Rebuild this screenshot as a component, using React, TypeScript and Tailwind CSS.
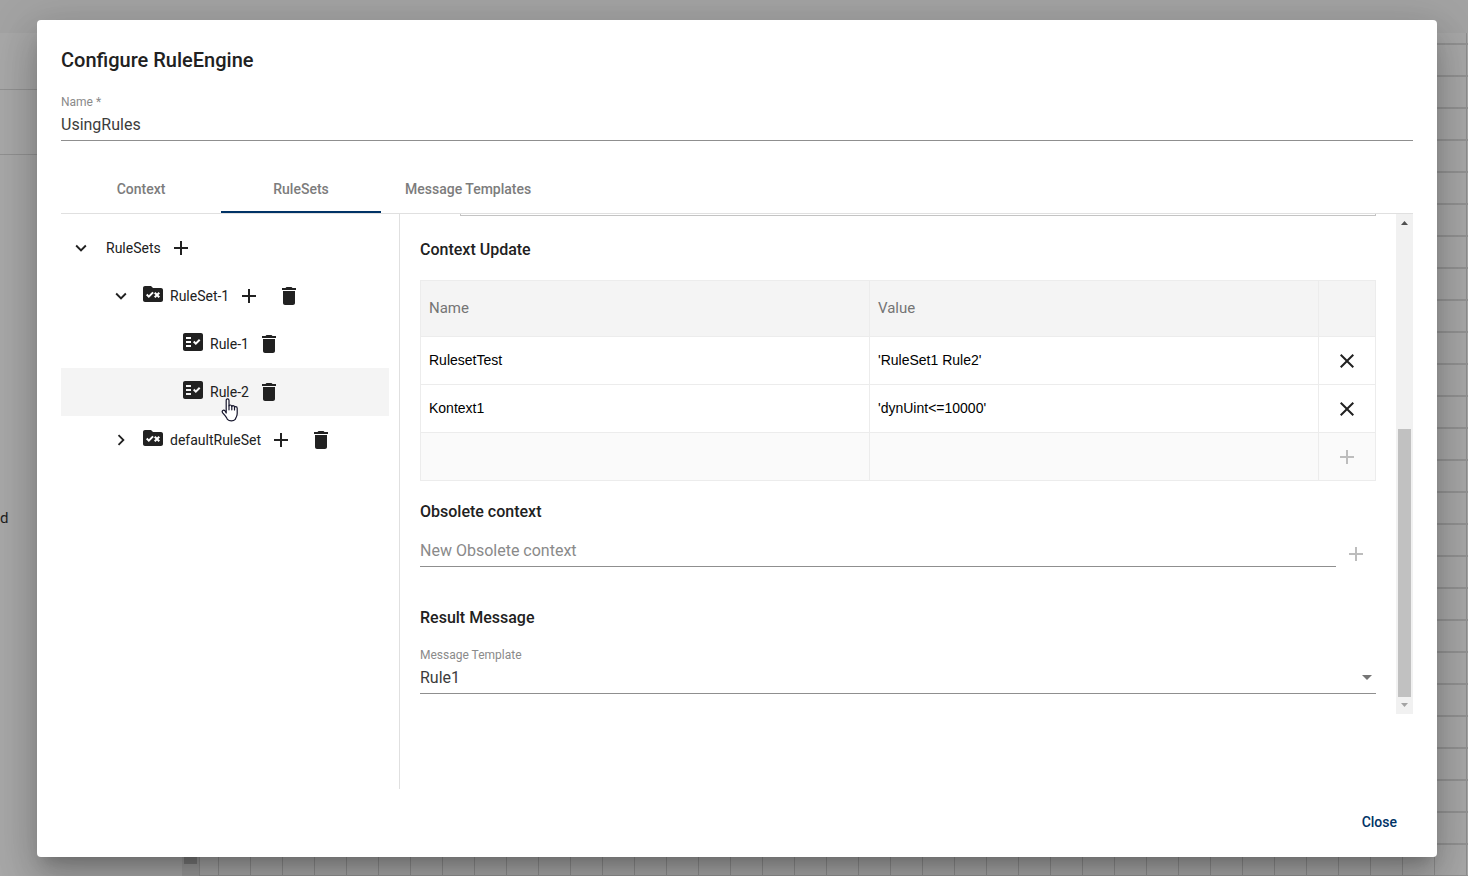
import { useState } from "react";
import type { ReactNode } from "react";
import {
  MdAdd,
  MdArrowDropDown,
  MdChevronRight,
  MdClose,
  MdDelete,
  MdExpandMore,
  MdFactCheck,
  MdRuleFolder,
} from "react-icons/md";

type NodeKind = "root" | "ruleset" | "rule";

interface TreeNode {
  name: string;
  kind: NodeKind;
  open?: boolean;
}

const tabs = ["Context", "RuleSets", "Message Templates"];

const treeNodes: TreeNode[] = [
  { name: "RuleSets", kind: "root", open: true },
  { name: "RuleSet-1", kind: "ruleset", open: true },
  { name: "Rule-1", kind: "rule" },
  { name: "Rule-2", kind: "rule" },
  { name: "defaultRuleSet", kind: "ruleset", open: false },
];

const contextUpdates = [
  { name: "RulesetTest", value: "'RuleSet1 Rule2'" },
  { name: "Kontext1", value: "'dynUint<=10000'" },
];

const indent: Record<NodeKind, string> = {
  root: "pl-0",
  ruleset: "pl-10",
  rule: "pl-[120px]",
};

function IconButton({ label, disabled, children }: { label: string; disabled?: boolean; children: ReactNode }) {
  return (
    <button
      type="button"
      aria-label={label}
      disabled={disabled}
      className="flex h-10 w-10 shrink-0 items-center justify-center text-2xl text-[#212121] disabled:text-[#bdbdbd]"
    >
      {children}
    </button>
  );
}

function HandCursor() {
  return (
    <svg className="absolute left-4 top-[18px] h-6 w-5" viewBox="0 0 20 24" aria-hidden="true">
      <path
        d="M5.2 15V2.400c0-1 .6-1.600 1.400-1.600S8 1.400 8 2.400v5.400c.2-.5.7-.8 1.300-.8.8 0 1.300.5 1.500 1.300.3-.4.700-.6 1.200-.6.8 0 1.400.5 1.500 1.300.300-.3.700-.4 1.100-.4.900 0 1.600.7 1.600 1.600v5c0 1.500-.3 2.500-.8 3.600-.5 1-.8 1.700-1.200 2.600-.8.900-2.200 1.400-3.800 1.400-1.700 0-3.100-.5-4-1.400-.4-1.200-1.200-2.200-2.300-3.700L1.700 14.800c-.7-1-.6-1.900.1-2.400.7-.5 1.600-.3 2.300.6z"
        fill="#fff"
        stroke="#14142b"
        strokeWidth="1.200"
        strokeLinejoin="round"
      />
      <path d="M8 7.800v4M10.800 8.300v3.500M13.500 9v3" stroke="#14142b" strokeWidth="1.200" strokeLinecap="round" />
    </svg>
  );
}

function TreeRow({ node, selected, onSelect }: { node: TreeNode; selected: boolean; onSelect: () => void }) {
  return (
    <li className={`flex h-12 items-center ${indent[node.kind]} ${selected ? "bg-[#f4f4f4]" : ""}`}>
      {node.kind !== "rule" && (
        <IconButton label={`Toggle ${node.name}`}>
          {node.open ? <MdExpandMore className="text-[22px]" /> : <MdChevronRight className="text-[22px]" />}
        </IconButton>
      )}
      {node.kind !== "root" && (
        <span className="pb-1 text-2xl text-[#212121]">
          {node.kind === "ruleset" ? <MdRuleFolder /> : <MdFactCheck />}
        </span>
      )}
      <div className="relative">
        <button type="button" onClick={onSelect} className="pl-[5px] text-sm text-[#212121]">
          {node.name}
        </button>
        {selected && <HandCursor />}
      </div>
      {node.kind !== "rule" && (
        <IconButton label={`Add to ${node.name}`}>
          <MdAdd />
        </IconButton>
      )}
      {node.kind !== "root" && (
        <IconButton label={`Delete ${node.name}`}>
          <MdDelete />
        </IconButton>
      )}
    </li>
  );
}

function RuleTree() {
  const [selected, setSelected] = useState("Rule-2");

  return (
    <ul className="w-[339px] shrink-0 border-r border-[#e0e0e0] pr-[10px] pt-[10px]">
      {treeNodes.map((node) => (
        <TreeRow
          key={node.name}
          node={node}
          selected={node.name === selected}
          onSelect={() => setSelected(node.name)}
        />
      ))}
    </ul>
  );
}

function ContextTable() {
  return (
    <table className="w-full table-fixed border-collapse text-left text-sm">
      <colgroup>
        <col />
        <col />
        <col className="w-[57px]" />
      </colgroup>
      <thead>
        <tr className="h-14 bg-[#f4f4f4] text-[15px] text-[#757575]">
          <th className="border border-[#ececec] px-2 font-normal">Name</th>
          <th className="border border-[#ececec] px-2 font-normal">Value</th>
          <td className="border border-[#ececec]" />
        </tr>
      </thead>
      <tbody>
        {contextUpdates.map((row) => (
          <tr key={row.name} className="h-12">
            <td className="border border-[#ececec] px-2 pb-[2px]">
              <input
                aria-label="Name"
                defaultValue={row.name}
                className="block w-full font-['Liberation_Sans',sans-serif] text-black outline-none"
              />
            </td>
            <td className="border border-[#ececec] px-2 pb-[2px]">
              <input
                aria-label="Value"
                defaultValue={row.value}
                className="block w-full font-['Liberation_Sans',sans-serif] text-black outline-none"
              />
            </td>
            <td className="border border-[#ececec] px-2">
              <IconButton label={`Remove ${row.name}`}>
                <MdClose />
              </IconButton>
            </td>
          </tr>
        ))}
        <tr className="h-12 bg-[#fafafa]">
          <td className="border border-[#ececec] px-2">
            <input aria-label="New name" className="block w-full outline-none" />
          </td>
          <td className="border border-[#ececec] px-2">
            <input aria-label="New value" className="block w-full outline-none" />
          </td>
          <td className="border border-[#ececec] px-2">
            <IconButton label="Add context update" disabled>
              <MdAdd />
            </IconButton>
          </td>
        </tr>
      </tbody>
    </table>
  );
}

function RuleForm() {
  return (
    <div className="min-w-0 flex-1 px-5">
      {/* lower edge of the condition editor, scrolled out of view */}
      <div className="ml-10 h-[2px] border-x border-b border-[#c4c4c4]" />

      <h2 className="mt-[22px] text-base font-medium">Context Update</h2>
      <div className="mt-[18px]">
        <ContextTable />
      </div>

      <h2 className="mt-[19px] text-base font-medium">Obsolete context</h2>
      <div className="mt-[10px] flex items-start">
        <input
          aria-label="New Obsolete context"
          placeholder="New Obsolete context"
          className="h-[33px] min-w-0 flex-1 border-b border-[#8f8f8f] text-base outline-none placeholder:text-[#8a8a8a]"
        />
        <IconButton label="Add obsolete context" disabled>
          <MdAdd />
        </IconButton>
      </div>

      <h2 className="mt-8 text-base font-medium">Result Message</h2>
      <div className="mt-[17px] flex flex-col">
        <label htmlFor="template" className="text-xs text-[#8a8a8a]">
          Message Template
        </label>
        <div className="relative">
          <select
            id="template"
            defaultValue="Rule1"
            className="block h-[31px] w-full appearance-none border-b border-[#8f8f8f] text-base text-[#3c3c3c] outline-none"
          >
            <option>Rule1</option>
          </select>
          <MdArrowDropDown className="pointer-events-none absolute right-[-3px] top-[2px] text-2xl text-[#757575]" />
        </div>
      </div>
    </div>
  );
}

function ScrollTrack() {
  return (
    <div className="flex w-[17px] shrink-0 flex-col items-center bg-[#f1f1f1]" aria-hidden="true">
      <svg className="h-[17px] w-[17px]" viewBox="0 0 17 17">
        <path d="M5 11h7L8.500 7z" fill="#505050" />
      </svg>
      <div className="h-[198px]" />
      <div className="w-[13px] flex-1 bg-[#c1c1c1]" />
      <svg className="h-[17px] w-[17px]" viewBox="0 0 17 17">
        <path d="M5 6h7L8.500 10z" fill="#a3a3a3" />
      </svg>
    </div>
  );
}

/* Dimmed editor behind the dialog: toolbar, element list and grid canvas */
function Backdrop() {
  return (
    <div className="absolute inset-0 flex flex-col overflow-hidden bg-[#a8a8a8]">
      <div className="h-[33px] shrink-0 bg-[#a3a3a3]" />
      <div className="flex flex-1">
        <div className="w-[182px] text-[15px] leading-6 text-[#1f1f1f]">
          <div className="h-[57px] border-b border-[#919191]" />
          <div className="h-[65px] border-b border-[#919191]" />
          <div className="mt-[351px]">d</div>
        </div>
        <div className="flex w-[17px] flex-col items-center bg-[#9c9c9c]">
          <div className="h-[831px] w-[13px] bg-[#7c7c7c]" />
        </div>
        <div className="flex-1 border-l border-[#8e8e8e] bg-[#a8a8a8] bg-[linear-gradient(#929292_2px,transparent_2px),linear-gradient(90deg,#8e8e8e_1px,transparent_1px)] bg-[size:32px_32px] bg-[position:18px_10px]" />
      </div>
    </div>
  );
}

export default function App() {
  const [activeTab, setActiveTab] = useState("RuleSets");

  return (
    <div className="relative flex min-h-screen flex-col font-[Roboto,sans-serif] text-[#212121]">
      <Backdrop />
      <div
        role="dialog"
        aria-labelledby="dialog-title"
        className="relative mb-[19px] ml-[37px] mr-[31px] mt-5 flex flex-1 flex-col rounded bg-white px-6 pb-4 pt-6 shadow-[0_11px_15px_-7px_rgba(0,0,0,0.2),0_24px_38px_3px_rgba(0,0,0,0.14),0_9px_46px_8px_rgba(0,0,0,0.12)]"
      >
        <h1 id="dialog-title" className="text-xl leading-8 font-medium">
          Configure RuleEngine
        </h1>

        <div className="mt-[18px] flex flex-col">
          <label htmlFor="engine-name" className="text-xs text-[#8a8a8a]">
            Name *
          </label>
          <input
            id="engine-name"
            defaultValue="UsingRules"
            className="h-[31px] w-full border-b border-[#8f8f8f] pb-[2px] text-base text-[#3c3c3c] outline-none"
          />
        </div>

        <div role="tablist" className="mt-6 flex border-b border-[#e0e0e0]">
          {tabs.map((tab) => (
            <button
              key={tab}
              type="button"
              role="tab"
              aria-selected={tab === activeTab}
              onClick={() => setActiveTab(tab)}
              className={`h-12 min-w-40 border-b-2 px-6 pt-[2px] text-sm font-medium text-[#7c7c7c] ${
                tab === activeTab ? "border-[#003366]" : "border-transparent"
              }`}
            >
              {tab}
            </button>
          ))}
        </div>

        <div className="flex flex-1">
          <RuleTree />
          <div className="flex min-w-0 flex-1 self-start">
            <div className="flex min-h-[500px] min-w-0 flex-1">
              <RuleForm />
              <ScrollTrack />
            </div>
          </div>
        </div>

        <div className="mt-4 flex justify-end">
          <button type="button" className="h-9 px-4 pb-[2px] text-sm font-medium text-[#003366]">
            Close
          </button>
        </div>
      </div>
    </div>
  );
}
